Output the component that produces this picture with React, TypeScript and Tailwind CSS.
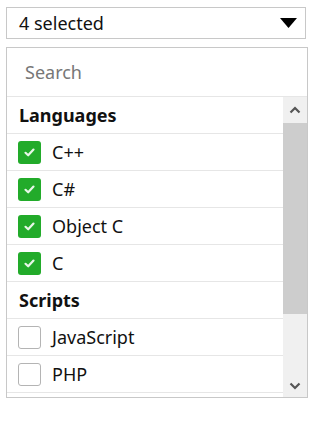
import React from "react";

type Item = { label: string; checked?: boolean; header?: boolean };

const items: Item[] = [
  { label: "Languages", header: true },
  { label: "C++", checked: true },
  { label: "C#", checked: true },
  { label: "Object C", checked: true },
  { label: "C", checked: true },
  { label: "Scripts", header: true },
  { label: "JavaScript", checked: false },
  { label: "PHP", checked: false },
];

function Box({ checked }: { checked?: boolean }) {
  if (checked) {
    return (
      <div className="w-[23px] h-[23px] rounded-[3px] bg-[#22ab2a] flex items-center justify-center">
        <svg width="13" height="13" viewBox="0 0 13 13">
          <path d="M2.5 6.8 L5.2 9.3 L10.5 3.6" fill="none" stroke="#e8f7e8" strokeWidth="2.2" strokeLinecap="round" strokeLinejoin="round" />
        </svg>
      </div>
    );
  }
  return <div className="w-[23px] h-[23px] rounded-[3px] border border-[#b4b4b4] bg-white" />;
}

export default function App() {
  return (
    <div className="w-[327px] h-[442px] bg-white text-[#111]" style={{ fontFamily: '"Noto Sans", "Open Sans", sans-serif' }}>
      <div className="pt-[7px] pl-[6px]">
        <div className="w-[300px] h-[32px] border border-[#c8c8c8] flex items-center justify-between pl-[12px] pr-[8px]">
          <span className="text-[18px] leading-none">4 selected</span>
          <svg width="17" height="10" viewBox="0 0 17 10">
            <path d="M0 0 L17 0 L8.5 10 Z" fill="#000" />
          </svg>
        </div>
        <div className="mt-[8px] w-[302px] h-[351px] border border-[#c8c8c8] flex flex-col overflow-hidden">
          <div className="h-[49px] border-b border-[#e6e6e6] flex items-center pl-[18px] text-[18px] text-[#777]">
            Search
          </div>
          <div className="flex flex-1 min-h-0">
            <div className="flex-1 flex flex-col overflow-hidden">
              {items.map((it) =>
                it.header ? (
                  <div key={it.label} className="h-[37px] shrink-0 border-b border-[#e6e6e6] flex items-center pl-[12px] text-[18px] font-bold">
                    {it.label}
                  </div>
                ) : (
                  <div key={it.label} className="h-[37px] shrink-0 border-b border-[#e6e6e6] flex items-center pl-[11px] gap-[11px] text-[18px]">
                    <Box checked={it.checked} />
                    <span>{it.label}</span>
                  </div>
                )
              )}
            </div>
            <div className="w-[24px] flex flex-col bg-[#f0f0f0]">
              <div className="h-[26px] flex items-center justify-center">
                <svg width="12" height="8" viewBox="0 0 12 8">
                  <path d="M1.5 6.5 L6 2 L10.5 6.5" fill="none" stroke="#555" strokeWidth="2.2" />
                </svg>
              </div>
              <div className="h-[191px] bg-[#cdcdcd]" />
              <div className="flex-1 flex items-end justify-center pb-[7px]">
                <svg width="12" height="8" viewBox="0 0 12 8">
                  <path d="M1.5 1.5 L6 6 L10.5 1.5" fill="none" stroke="#555" strokeWidth="2.2" />
                </svg>
              </div>
            </div>
          </div>
        </div>
      </div>
    </div>
  );
}
